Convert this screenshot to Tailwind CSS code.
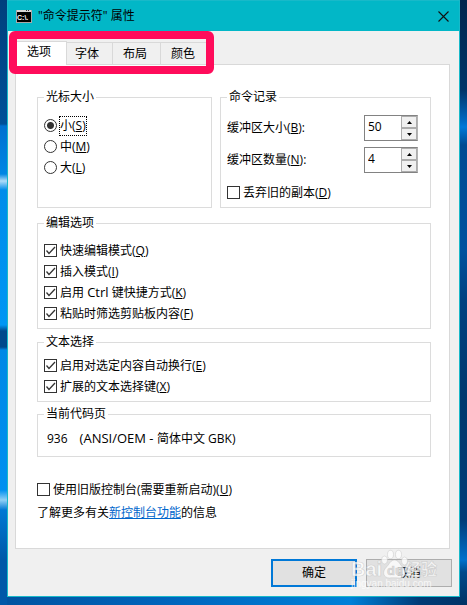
<!DOCTYPE html>
<html lang="zh-CN">
<head>
    <meta charset="UTF-8">
    <meta name="viewport" content="width=device-width, initial-scale=1.0">
    <title>"命令提示符" 属性</title>
    <script src="https://cdn.jsdelivr.net/npm/@tailwindcss/browser@4"></script>
    <style>
        body { font-family: 'Open Sans', 'Noto Sans CJK SC', sans-serif; }
    </style>
</head>
<body class="bg-[linear-gradient(90deg,#0053a0,#0064bb_35%,#0080d8_75%,#003a75_90%,#003468)] text-xs leading-4 text-black">
    <div class="flex min-h-screen">
        <!-- Wallpaper, left edge -->
        <div class="w-[7px] shrink-0 bg-[linear-gradient(180deg,#003f7c_0,#005098_124px,#0070d0_126px,#0086e4_174px,#b0dcf8_181px,#008cea_190px,#0096f4_325px,#00498c_331px,#00498c_347px,#0088e6_350px,#0090f0_490px,#90d0f5_500px,#0078d4_510px,#0058a8_560px,#0058a8_605px)]"></div>

        <!-- Window -->
        <div class="relative mb-2 flex min-w-0 flex-1 flex-col border border-[#18b9c9] bg-[#f0f0f0]">
            <header class="flex h-[30px] items-center bg-[#02b7c7] pl-2 pr-2.5">
                <svg class="mr-1.5 shrink-0" width="16" height="13" viewBox="0 0 16 13">
                    <rect width="16" height="13" fill="#a8a8a8"/>
                    <rect x="1" y="0" width="14" height="2" fill="#d8d8d8"/>
                    <rect x="10" y="0" width="1" height="1" fill="#333"/>
                    <rect x="12" y="0" width="1" height="1" fill="#333"/>
                    <rect x="1" y="2" width="14" height="10" fill="#000"/>
                    <text x="1" y="10" font-family="Liberation Sans" font-weight="bold" font-size="7" fill="#fff">C:\.</text>
                </svg>
                <h1 class="flex-1">"命令提示符" 属性</h1>
                <button type="button" aria-label="关闭">
                    <svg width="11" height="11" viewBox="0 0 11 11" fill="none" stroke="#111" stroke-width="1.1"><path d="M.5.5l10 10M10.5.5l-10 10"/></svg>
                </button>
            </header>

            <!-- Tabs -->
            <nav class="relative flex h-[33px] items-end pl-2">
                <button type="button" class="relative z-10 -mb-px flex h-6 w-[51px] items-center border border-b-0 border-[#d9d9d9] bg-white pb-1 pl-2.5">选项</button>
                <button type="button" class="flex h-[22px] w-[46px] items-center border border-b-0 border-l-0 border-[#d9d9d9] pl-2">字体</button>
                <button type="button" class="flex h-[22px] w-12 items-center border border-b-0 border-l-0 border-[#d9d9d9] pl-2.5">布局</button>
                <button type="button" class="flex h-[22px] w-12 items-center border border-b-0 border-l-0 border-[#d9d9d9] pl-2.5">颜色</button>
                <!-- Highlight around the tabs -->
                <div class="pointer-events-none absolute left-px top-0 z-20 h-[43px] w-[205px] rounded-md border-8 border-[#ff0c5b]"></div>
            </nav>

            <main class="ml-[7px] mr-[9px] flex-1 border border-[#d9d9d9] bg-white pl-[21px] pr-[18px] pt-6">
                <div class="grid grid-cols-[175fr_211fr] gap-2">
                    <fieldset class="border border-[#dcdcdc] px-1.5">
                        <legend class="px-0.5">光标大小</legend>
                        <div class="pt-2.5">
                            <div class="flex h-[21px] items-center">
                                <input type="radio" name="cursor" id="small" checked class="size-[13px] appearance-none rounded-full border border-[#333] checked:bg-[radial-gradient(circle,#333_3px,transparent_4px)]">
                                <label for="small" class="ml-0.5 border border-dotted border-black py-px">小(<u>S</u>)</label>
                            </div>
                            <div class="flex h-[21px] items-center">
                                <input type="radio" name="cursor" id="medium" class="size-[13px] appearance-none rounded-full border border-[#333] checked:bg-[radial-gradient(circle,#333_3px,transparent_4px)]">
                                <label for="medium" class="ml-[3px]">中(<u>M</u>)</label>
                            </div>
                            <div class="flex h-[21px] items-center">
                                <input type="radio" name="cursor" id="large" class="size-[13px] appearance-none rounded-full border border-[#333] checked:bg-[radial-gradient(circle,#333_3px,transparent_4px)]">
                                <label for="large" class="ml-[3px]">大(<u>L</u>)</label>
                            </div>
                        </div>
                    </fieldset>

                    <fieldset class="border border-[#dcdcdc] px-1.5 pb-1">
                        <legend class="px-0.5">命令记录</legend>
                        <div class="flex flex-col gap-1.5 pr-1.5 pt-2.5">
                            <div class="flex items-center justify-between">
                                <label for="bufSize">缓冲区大小(<u>B</u>):</label>
                                <div class="flex h-[26px] w-[54px] border border-[#828282] border-r-[#b4b4b4] bg-white">
                                    <input type="number" id="bufSize" value="50" class="min-w-0 flex-1 appearance-none pb-0.5 pl-[3px] text-xs [-moz-appearance:textfield] [&::-webkit-inner-spin-button]:appearance-none">
                                    <div class="flex w-4 flex-col">
                                        <button type="button" aria-label="增大" class="grid flex-1 place-items-center border border-[#acacac] bg-[#f0f0f0]"><svg width="5" height="3" viewBox="0 0 5 3"><path d="M0 3L2.500 0L5 3z"/></svg></button>
                                        <button type="button" aria-label="减小" class="grid flex-1 place-items-center border border-[#acacac] bg-[#f0f0f0]"><svg width="5" height="3" viewBox="0 0 5 3"><path d="M0 0L2.500 3L5 0z"/></svg></button>
                                    </div>
                                </div>
                            </div>
                            <div class="flex items-center justify-between">
                                <label for="bufCount">缓冲区数量(<u>N</u>):</label>
                                <div class="flex h-[26px] w-[54px] border border-[#828282] border-r-[#b4b4b4] bg-white">
                                    <input type="number" id="bufCount" value="4" class="min-w-0 flex-1 appearance-none pb-0.5 pl-[3px] text-xs [-moz-appearance:textfield] [&::-webkit-inner-spin-button]:appearance-none">
                                    <div class="flex w-4 flex-col">
                                        <button type="button" aria-label="增大" class="grid flex-1 place-items-center border border-[#acacac] bg-[#f0f0f0]"><svg width="5" height="3" viewBox="0 0 5 3"><path d="M0 3L2.500 0L5 3z"/></svg></button>
                                        <button type="button" aria-label="减小" class="grid flex-1 place-items-center border border-[#acacac] bg-[#f0f0f0]"><svg width="5" height="3" viewBox="0 0 5 3"><path d="M0 0L2.500 3L5 0z"/></svg></button>
                                    </div>
                                </div>
                            </div>
                        </div>
                        <label class="mt-[9px] flex h-[21px] items-center gap-[3px]">
                            <input type="checkbox" class="size-[13px] appearance-none border border-[#333]">
                            <span>丢弃旧的副本(<u>D</u>)</span>
                        </label>
                    </fieldset>
                </div>

                <fieldset class="mt-[7px] border border-[#dcdcdc] px-1.5 pb-1">
                    <legend class="px-0.5">编辑选项</legend>
                    <div class="pt-[9px]">
                        <label class="flex h-[21px] items-center gap-[3px]">
                            <span class="grid"><input type="checkbox" checked class="peer col-start-1 row-start-1 size-[13px] appearance-none border border-[#333]"><svg class="pointer-events-none invisible col-start-1 row-start-1 peer-checked:visible" width="13" height="13" viewBox="0 0 13 13" fill="none" stroke="#333" stroke-width="1.3"><path d="M2.500 6.500L5 9.500L11 3"/></svg></span>
                            <span>快速编辑模式(<u>Q</u>)</span>
                        </label>
                        <label class="flex h-[21px] items-center gap-[3px]">
                            <span class="grid"><input type="checkbox" checked class="peer col-start-1 row-start-1 size-[13px] appearance-none border border-[#333]"><svg class="pointer-events-none invisible col-start-1 row-start-1 peer-checked:visible" width="13" height="13" viewBox="0 0 13 13" fill="none" stroke="#333" stroke-width="1.3"><path d="M2.500 6.500L5 9.500L11 3"/></svg></span>
                            <span>插入模式(<u>I</u>)</span>
                        </label>
                        <label class="flex h-[21px] items-center gap-[3px]">
                            <span class="grid"><input type="checkbox" checked class="peer col-start-1 row-start-1 size-[13px] appearance-none border border-[#333]"><svg class="pointer-events-none invisible col-start-1 row-start-1 peer-checked:visible" width="13" height="13" viewBox="0 0 13 13" fill="none" stroke="#333" stroke-width="1.3"><path d="M2.500 6.500L5 9.500L11 3"/></svg></span>
                            <span>启用 <span class="text-[13px]">Ctrl</span> 键快捷方式(<u>K</u>)</span>
                        </label>
                        <label class="flex h-[21px] items-center gap-[3px]">
                            <span class="grid"><input type="checkbox" checked class="peer col-start-1 row-start-1 size-[13px] appearance-none border border-[#333]"><svg class="pointer-events-none invisible col-start-1 row-start-1 peer-checked:visible" width="13" height="13" viewBox="0 0 13 13" fill="none" stroke="#333" stroke-width="1.3"><path d="M2.500 6.500L5 9.500L11 3"/></svg></span>
                            <span>粘贴时筛选剪贴板内容(<u>F</u>)</span>
                        </label>
                    </div>
                </fieldset>

                <fieldset class="mt-[5px] border border-[#dcdcdc] px-1.5 pb-1">
                    <legend class="px-0.5">文本选择</legend>
                    <div class="pt-[5px]">
                        <label class="flex h-[21px] items-center gap-[3px]">
                            <span class="grid"><input type="checkbox" checked class="peer col-start-1 row-start-1 size-[13px] appearance-none border border-[#333]"><svg class="pointer-events-none invisible col-start-1 row-start-1 peer-checked:visible" width="13" height="13" viewBox="0 0 13 13" fill="none" stroke="#333" stroke-width="1.3"><path d="M2.500 6.500L5 9.500L11 3"/></svg></span>
                            <span>启用对选定内容自动换行(<u>E</u>)</span>
                        </label>
                        <label class="flex h-[21px] items-center gap-[3px]">
                            <span class="grid"><input type="checkbox" checked class="peer col-start-1 row-start-1 size-[13px] appearance-none border border-[#333]"><svg class="pointer-events-none invisible col-start-1 row-start-1 peer-checked:visible" width="13" height="13" viewBox="0 0 13 13" fill="none" stroke="#333" stroke-width="1.3"><path d="M2.500 6.500L5 9.500L11 3"/></svg></span>
                            <span>扩展的文本选择键(<u>X</u>)</span>
                        </label>
                    </div>
                </fieldset>

                <fieldset class="mt-1 border border-[#dcdcdc] px-1.5 pb-[9px]">
                    <legend class="px-0.5">当前代码页</legend>
                    <p class="flex items-baseline gap-3 pl-[3px] pt-2"><span>936</span><span><span class="text-[13px]">(ANSI/OEM - </span>简体中文 GBK)</span></p>
                </fieldset>

                <label class="mt-[22px] flex h-[21px] items-center gap-[3px]">
                    <input type="checkbox" class="size-[13px] appearance-none border border-[#333]">
                    <span>使用旧版控制台(需要重新启动)(<u>U</u>)</span>
                </label>
                <p class="mt-[5px]">了解更多有关<a href="#" class="text-[#0066cc] underline">新控制台功能</a>的信息</p>
            </main>

            <footer class="flex justify-end gap-[9px] pb-[9px] pr-[7px] pt-2.5">
                <button type="button" class="h-7 w-[86px] border-2 border-[#0078d7] bg-[#e1e1e1]">确定</button>
                <button type="button" class="h-7 w-[86px] border border-[#adadad] bg-[#e1e1e1]">取消</button>
            </footer>

            <!-- Watermark -->
            <svg class="pointer-events-none absolute bottom-0 right-[18px]" width="96" height="50" viewBox="0 0 96 50" fill="#fff" fill-opacity=".75" stroke="#b4b4b4" stroke-opacity=".5" stroke-width=".7">
                <text x="6" y="30" font-family="Liberation Sans" font-weight="bold" font-size="20">Bai</text>
                <ellipse cx="39.500" cy="14" rx="3" ry="4"/>
                <ellipse cx="45.500" cy="8.500" rx="3" ry="4.200"/>
                <ellipse cx="53.500" cy="8.500" rx="3" ry="4.200"/>
                <ellipse cx="59.500" cy="15" rx="3" ry="4"/>
                <path d="M49.500 14c4 0 5 4 8 7c4 4 3 11-3 11c-3 0-7-.5-10 0c-6 0-8-6-3-11c3-3 4-7 8-7z"/>
                <text x="42" y="29" font-family="Liberation Sans" font-weight="bold" font-size="13" fill="#dadada">du</text>
                <text x="60" y="29" font-family="Noto Sans CJK SC" font-weight="bold" font-size="16">经验</text>
                <text x="6" y="41" font-family="Liberation Sans" font-size="10" stroke="none">jingyan.baidu.com</text>
            </svg>
        </div>

        <!-- Wallpaper, right edge -->
        <div class="w-[7px] shrink-0 bg-[linear-gradient(180deg,#00264e_0,#003468_90px,#0068c0_120px,#0078d8_127px,#004a92_145px,#00519e_250px,#004080_300px,#00386e_400px,#003c78_520px,#0070cc_560px,#00498c_572px,#003264_605px)]"></div>
    </div>
</body>
</html>
